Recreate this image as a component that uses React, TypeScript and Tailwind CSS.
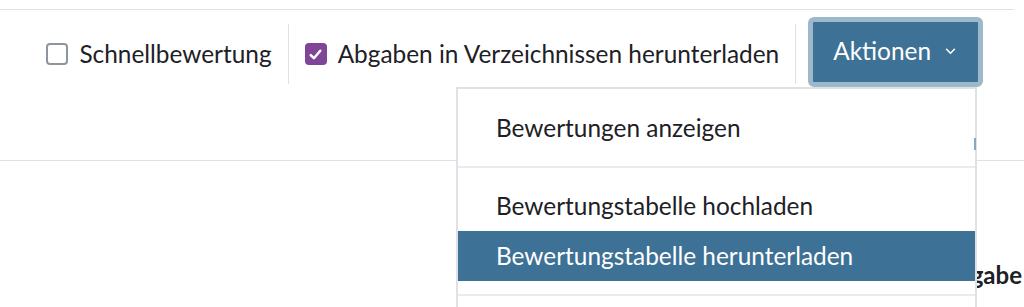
import React from 'react';

function Box({ checked }: { checked?: boolean }) {
  if (checked) {
    return (
      <span className="flex h-[22px] w-[22px] shrink-0 items-center justify-center rounded-[4px] bg-[#7f4597]">
        <svg viewBox="0 0 16 16" className="h-[17px] w-[17px]" fill="none" stroke="white" strokeWidth={2.4} strokeLinecap="round" strokeLinejoin="round">
          <path d="M3.5 8.5l3 3 6-7" />
        </svg>
      </span>
    );
  }
  return <span className="h-[22px] w-[22px] shrink-0 rounded-[4px] border-2 border-[#8f959e] bg-white" />;
}

export default function App() {
  return (
    <div className="relative h-[307px] w-[1024px] overflow-hidden bg-white font-['Lato',sans-serif] text-[#1d2125]">
      <div className="pt-[9px]">
        <div className="mr-[10px] h-px bg-[#dee2e6]" />
      </div>

      <div className="flex h-[88px] items-start justify-end pr-[41px] pt-[14px]">
        <div className="flex h-[60px] items-center gap-[11px] pr-[16px]">
          <Box />
          <span className="text-[24.4px]">Schnellbewertung</span>
        </div>
        <div className="flex h-[60px] items-center gap-[11px] border-l border-[#dee2e6] pl-[16px] pr-[16px]">
          <Box checked />
          <span className="text-[24.4px]">Abgaben in Verzeichnissen herunterladen</span>
        </div>
        <div className="flex h-[60px] items-center border-l border-[#dee2e6] pl-[12px]">
          <button className="-mt-[5px] flex h-[70px] items-center gap-[14px] rounded-[6px] border-[5px] border-[#9db7cb] bg-[#3e7196] pl-[20px] pr-[22px] text-[24.4px] text-white">
            Aktionen
            <svg viewBox="0 0 12 8" className="h-[7px] w-[11px]" fill="none" stroke="white" strokeWidth={1.8} strokeLinecap="round" strokeLinejoin="round">
              <path d="M1.5 1.5L6 6l4.5-4.5" />
            </svg>
          </button>
        </div>
      </div>

      <div className="mt-[62px] h-px bg-[#dee2e6]" />

      <div className="flex justify-end pr-[2px] pt-[96px]">
        <span className="text-[24px] font-bold">Abgabe</span>
      </div>

      <div className="absolute left-[456px] top-[87px] w-[521px] border-2 border-b-0 border-[#dee2e6] bg-white pt-[14px] text-[24.4px]">
        <div className="flex h-[50px] items-center px-[38px]">Bewertungen anzeigen</div>
        <div className="my-[13px] h-[2px] bg-[#e9ecef]" />
        <div className="flex h-[50px] items-center px-[38px]">Bewertungstabelle hochladen</div>
        <div className="flex h-[50px] items-center bg-[#3e7196] px-[38px] text-white">Bewertungstabelle herunterladen</div>
        <div className="mt-[13px] h-[2px] bg-[#e9ecef]" />
        <div className="h-[40px]" />
      </div>
      <div className="absolute left-[974px] top-[138px] h-[12px] w-[2px] bg-[#8fa6b8]" />
    </div>
  );
}
